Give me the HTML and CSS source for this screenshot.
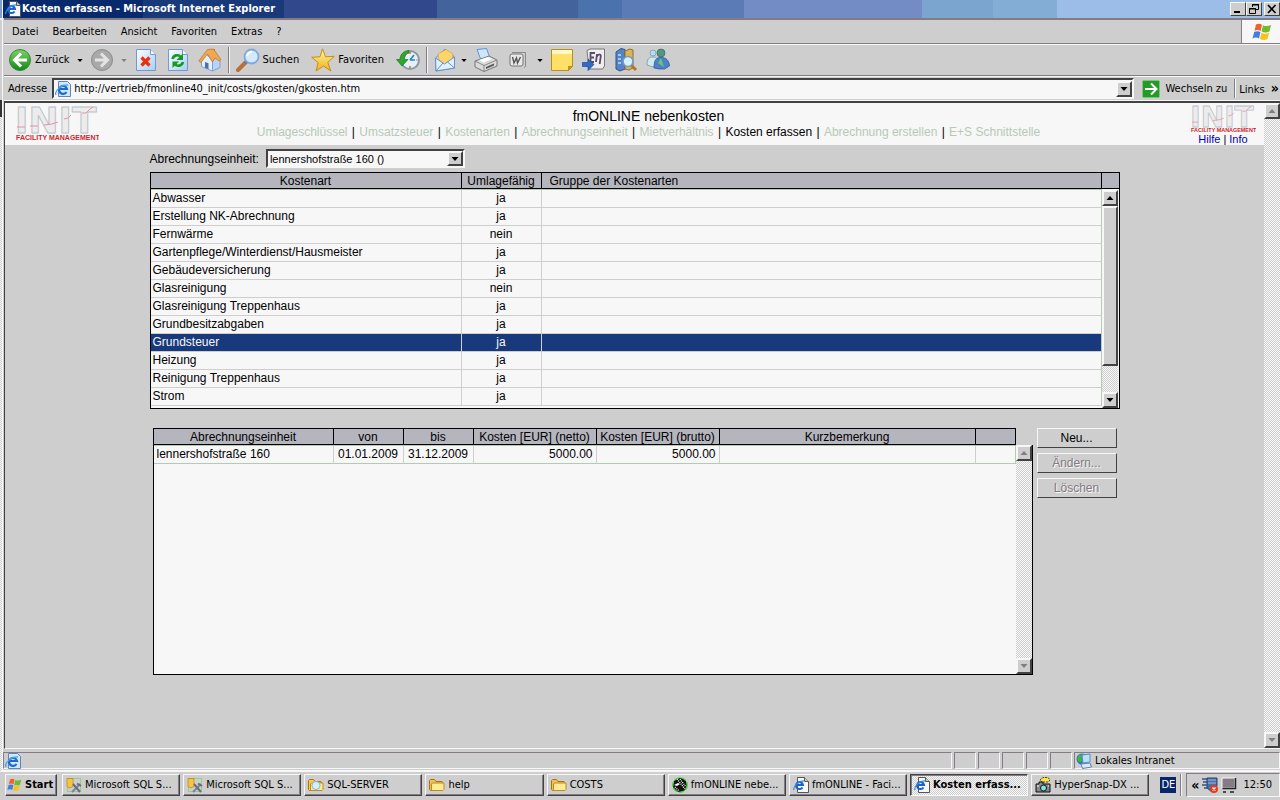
FILE: index.html
```html
<!DOCTYPE html>
<html lang="de">
<head>
    <meta charset="UTF-8">
    <meta name="viewport" content="width=device-width, initial-scale=1.0">
    <title>Kosten erfassen</title>
    <link rel="stylesheet" href="styles.css">
</head>
<body>
    <!-- Icon sprites -->
    <svg class="sprites" aria-hidden="true">
        <defs>
            <linearGradient id="g-green" x1="0" y1="0" x2="0" y2="1"><stop offset="0" stop-color="#7fd06a"/><stop offset="1" stop-color="#128a18"/></linearGradient>
            <linearGradient id="g-gold" x1="0" y1="0" x2="0" y2="1"><stop offset="0" stop-color="#fff6a0"/><stop offset="1" stop-color="#efb21c"/></linearGradient>
            <linearGradient id="g-page" x1="0" y1="0" x2="1" y2="1"><stop offset="0" stop-color="#ffffff"/><stop offset="1" stop-color="#a9cdf5"/></linearGradient>
        </defs>
        <symbol id="i-ie" viewBox="0 0 16 16">
            <path d="M4.500.5h7l4 4v11h-11z" fill="#f7f7f7" stroke="#555"/>
            <path d="M11.500.5v4h4" fill="#ccc" stroke="#555"/>
            <path d="M9.500 10.500a3.500 3.500 0 1 1 .5-2.500H3.500" fill="none" stroke="#1c62c8" stroke-width="2"/>
            <path d="M1 13C-.5 10 6 3.500 11 4" fill="none" stroke="#2f8ae6" stroke-width="1.200"/>
        </symbol>
        <symbol id="i-iepage" viewBox="0 0 16 16">
            <path d="M3.500.5h9l3 3v12h-12z" fill="#d4e6fb" stroke="#5a86bd"/>
            <path d="M11.500 11a4 4 0 1 1 .5-3H4.500" fill="none" stroke="#1b6cc9" stroke-width="2.200"/>
            <path d="M1 14C-1 10 7 3 13 4" fill="none" stroke="#49a2ee" stroke-width="1.300"/>
        </symbol>
        <symbol id="i-flag" viewBox="0 0 20 18">
            <path d="M4 1.500c2-1.200 4-1 6 .2L8.600 8c-2-1.200-4-1.300-6.100-.2z" fill="#f0602a"/>
            <path d="M11 2.200c2.500 1.300 5 1.200 8-.2l-1.600 6.500c-2.600 1.300-5 1.300-7.800.1z" fill="#6fbb2c"/>
            <path d="M2.200 9c2-1.200 4.200-1 6.200.1L7 15.500c-2-1.200-4-1.200-6.500-.1z" fill="#3f7fe0"/>
            <path d="M9.400 9.800c2.400 1.200 5 1.200 7.700 0l-1.600 6.300c-2.500 1.400-5 1.200-7.600-.1z" fill="#fbc21c"/>
        </symbol>
        <symbol id="i-back" viewBox="0 0 24 24">
            <circle cx="12" cy="12" r="10.500" fill="url(#g-green)" stroke="#2e8b2e"/>
            <path d="M13 5.500L6.500 12l6.500 6.500M7 12h12" fill="none" stroke="#fff" stroke-width="3"/>
        </symbol>
        <symbol id="i-forward" viewBox="0 0 24 24">
            <circle cx="12" cy="12" r="10.500" fill="#a9a9a9" stroke="#8b8b8b"/>
            <path d="M11 5.500l6.500 6.500-6.500 6.500M17 12H5" fill="none" stroke="#e4e4e4" stroke-width="3"/>
        </symbol>
        <symbol id="i-stop" viewBox="0 0 24 24">
            <path d="M2.500 1.500h14l5 5v16h-19z" fill="url(#g-page)" stroke="#6e9bd4"/>
            <path d="M16.500 1.500v5h5" fill="#fff" stroke="#6e9bd4"/>
            <path d="M7.500 9.500l8 8m0-8l-8 8" stroke="#e8320e" stroke-width="3.200"/>
        </symbol>
        <symbol id="i-refresh" viewBox="0 0 24 24">
            <path d="M2.500 1.500h14l5 5v16h-19z" fill="url(#g-page)" stroke="#6e9bd4"/>
            <path d="M16.500 1.500v5h5" fill="#fff" stroke="#6e9bd4"/>
            <path d="M6.500 11c1-4 6-5 8-2" fill="none" stroke="#139a20" stroke-width="2.600"/>
            <path d="M17 5.500V12h-6.500z" fill="#139a20"/>
            <path d="M17 14c-1 4-6 5-8 2" fill="none" stroke="#139a20" stroke-width="2.600"/>
            <path d="M6.500 20v-6.500H13z" fill="#139a20"/>
        </symbol>
        <symbol id="i-home" viewBox="0 0 24 24">
            <path d="M14 1.500h3V8h-3z" fill="#b8321c"/>
            <path d="M3.500 12l5-6 6 7v10l-11-4.500z" fill="#e4effc" stroke="#7ea3d6"/>
            <path d="M14.500 13l4-5 3.500 4v7.500l-7.500 3.500z" fill="#b8d3f6" stroke="#7ea3d6"/>
            <path d="M.8 13L9.500 1.500l6-.5L23 11.500l-2 1.500-4-3-2.500 4-5-8-6.500 8.500z" fill="#f0a850" stroke="#c06f20" stroke-width=".7"/>
            <path d="M7 14l3.500 1.200v6L7 19.800z" fill="#4c6fb0"/>
        </symbol>
        <symbol id="i-search" viewBox="0 0 24 24">
            <path d="M2 22l8-8" stroke="#b9703c" stroke-width="4" stroke-linecap="round"/>
            <path d="M9 15l2-2" stroke="#5078c0" stroke-width="3"/>
            <circle cx="15.500" cy="8.500" r="7" fill="#d4ebff" stroke="#7fa8de" stroke-width="1.800"/>
            <path d="M11 8a5 5 0 0 1 5-4" fill="none" stroke="#fff" stroke-width="2"/>
        </symbol>
        <symbol id="i-star" viewBox="0 0 24 24">
            <path d="M11.500.8l3 8 8.800-.5-6.500 6 3 8.700-7.300-5L5 23l2.200-8.300L.7 9.300 9 8.800z" fill="url(#g-gold)" stroke="#c98c12"/>
        </symbol>
        <symbol id="i-history" viewBox="0 0 24 24">
            <circle cx="14" cy="12" r="9" fill="#e3f1fb" stroke="#8b9aa5" stroke-width="2"/>
            <path d="M14 12l4-5M14 12h5" stroke="#3a78b8" stroke-width="1.600"/>
            <path d="M14 4v2m0 12v2m6.500-8h1" stroke="#dd5522" stroke-width="1.300"/>
            <path d="M13 2.500C6 3 4 8 4 11.500H.5L6 18l6-6.500H8.500C8.500 8 10 5.500 13 5z" fill="#2fa52f" stroke="#187818" stroke-width=".7"/>
        </symbol>
        <symbol id="i-mail" viewBox="0 0 24 24">
            <path d="M1.500 10L11 1l9.500 8v11L2 23z" fill="#b9d9fa" stroke="#5f92d0"/>
            <path d="M4 6l8-4.500L19 6l-1 6-7 5-6-5z" fill="#ffd56b" stroke="#d9a23a" stroke-width=".7"/>
            <path d="M1.500 10l9 6 10-7v11L2 23z" fill="#e1f0fe" stroke="#5f92d0"/>
            <path d="M2 23l7-8m11.500 5l-7-6" stroke="#5f92d0"/>
        </symbol>
        <symbol id="i-print" viewBox="0 0 24 24">
            <path d="M3 1.500L12.500.5l3.500 9.500-9 2z" fill="#cfe6ff" stroke="#5e94dc"/>
            <path d="M1 13l14-5 8 4v6l-13 5.500L1 19z" fill="#dadada" stroke="#777"/>
            <path d="M1 13l9 4.500 13-5.500M10 17.500v6" fill="none" stroke="#888"/>
            <path d="M12 19l8-3.500v2L12 21z" fill="#555"/>
            <path d="M5 12l9-3 4 2-8.500 3.500z" fill="#fff"/>
        </symbol>
        <symbol id="i-word" viewBox="0 0 24 24">
            <path d="M6 4.500h13.500v14L18 19.500" fill="none" stroke="#8a8a8a"/>
            <rect x="4" y="6" width="13" height="12" rx="2" fill="#e9e9e9" stroke="#777"/>
            <path d="M6.500 9l1.500 6 2.500-5 1 5 3-6" fill="none" stroke="#555" stroke-width="1.400"/>
        </symbol>
        <symbol id="i-note" viewBox="0 0 24 24">
            <path d="M1.500 1.500h21v17l-4 4h-17z" fill="#ffe066" stroke="#b98f1a"/>
            <path d="M2 2h20v4H2z" fill="#fff7c6"/>
            <path d="M18.500 22.500v-4h4z" fill="#d99a12" stroke="#b98f1a"/>
        </symbol>
        <symbol id="i-en" viewBox="0 0 24 24">
            <path d="M5 2.500l3-1.500h14.500v17l-2 3H7z" fill="#eee" stroke="#777"/>
            <path d="M13 5H8.500v9H12M8.500 9.500H12M14 14l1-8M14.500 9c3-4 5-3 4 1l-.8 6" fill="none" stroke="#574d6b" stroke-width="1.800"/>
            <path d="M.5 14.500H6v-3.500l6 5.500-6 6v-4H.5z" fill="#2f6cc8" stroke="#1b4a96" stroke-width=".7"/>
        </symbol>
        <symbol id="i-books" viewBox="0 0 24 24">
            <path d="M2 4l5-3.500 4 1V21l-5 2-4-2z" fill="#5484c4" stroke="#2e568e"/>
            <path d="M4 7h3m-3 4h3m-3 4h3" stroke="#c3dcf8" stroke-width="1.500"/>
            <path d="M11 3l5-2 3 1v18l-4 2-4-1z" fill="#d9b45a" stroke="#947127"/>
            <path d="M17 17l5 5" stroke="#b8752a" stroke-width="3"/>
            <circle cx="14" cy="13.500" r="5" fill="#d8efff" stroke="#6f9ad0" stroke-width="1.600"/>
        </symbol>
        <symbol id="i-people" viewBox="0 0 24 24">
            <circle cx="7" cy="5" r="3" fill="#b9dcec" stroke="#6f9aa6" stroke-width=".7"/>
            <path d="M1 17c0-6 2-8 6-8s5 2 5 7l-5 3z" fill="#cfe9ee" stroke="#5d90a8" stroke-width=".7"/>
            <circle cx="15" cy="5" r="4" fill="#52987e" stroke="#2f6c70" stroke-width=".7"/>
            <path d="M8 20c0-8 2-10.500 7-10.500S23 12 23.500 18l-5 3H13z" fill="#4c82cc" stroke="#284f92" stroke-width=".7"/>
            <path d="M15 10l3 9-6-4z" fill="#6fc46a"/>
        </symbol>
        <symbol id="i-go" viewBox="0 0 18 18">
            <path d="M0 0h18v18H0z" fill="#259a28" stroke="#d7f0d3"/>
            <path d="M9 3.500L14.500 9 9 14.500M3 9h11" fill="none" stroke="#fff" stroke-width="2"/>
        </symbol>
        <symbol id="i-down" viewBox="0 0 8 4"><path d="M.5 0h7L4 4z"/></symbol>
        <symbol id="i-up" viewBox="0 0 8 4"><path d="M.5 4h7L4 0z"/></symbol>
        <symbol id="i-sql" viewBox="0 0 16 16">
            <path d="M1.500 1.500h13v13h-13z" fill="none" stroke="#5ecb3a" stroke-dasharray="1 1"/>
            <path d="M1 1.500h6v8L4 11 1 9.500z" fill="#f5c443" stroke="#b8821a" stroke-width=".7"/>
            <path d="M6 15l8-8" stroke="#6d88ad" stroke-width="2"/>
            <path d="M7 7l7 8M11 6.500l4 2.500" stroke="#6b6b7b" stroke-width="2"/>
        </symbol>
        <symbol id="i-folder" viewBox="0 0 16 14">
            <path d="M.5 11.500v-9l1-1h4l1.500 2h6l.5 1v8h-12z" fill="#f2c14a" stroke="#a8741a"/>
            <path d="M2.500 12.500V6l1-1h11.500v6.500l-1 1z" fill="#ffeb94" stroke="#c08a22"/>
        </symbol>
        <symbol id="i-folder-find" viewBox="0 0 16 14">
            <path d="M.5 11.500v-9l1-1h4l1.500 2h6l.5 1v8h-12z" fill="#f6c95a" stroke="#a8741a"/>
            <path d="M2.500 12.500V6l1-1h11.500v6.500l-1 1z" fill="#ffe796" stroke="#c08a22"/>
            <circle cx="8" cy="7.500" r="4" fill="#d3f1fb" stroke="#8ab6cc"/>
        </symbol>
        <symbol id="i-zebra" viewBox="0 0 16 16">
            <circle cx="8" cy="8" r="7.200" fill="#111" stroke="#46d838" stroke-width="1.400" stroke-dasharray="5 2"/>
            <path d="M5 2l8 10M8 2l6 8M3 10l4 4" stroke="#eee" stroke-width="1.400" stroke-dasharray="1 1"/>
            <path d="M2 8l4-2 2 1-3 2z" fill="#fff"/>
        </symbol>
        <symbol id="i-camera" viewBox="0 0 16 16">
            <path d="M5 3l3-2.500h5L15 3l-2 2H7z" fill="#ffe14a" stroke="#4b4200" stroke-dasharray="2 1"/>
            <path d="M1 7h3V5h4v2h7v8H1z" fill="#888" stroke="#111"/>
            <circle cx="8.500" cy="11" r="3" fill="#7fe5e5" stroke="#111"/>
            <path d="M2 9h2m9 0h1" stroke="#fff"/>
        </symbol>
        <symbol id="i-intranet" viewBox="0 0 16 16">
            <circle cx="6" cy="6" r="5.500" fill="#2f70d8"/>
            <path d="M2 3c3-3 5-1 4 1s1 4-1 5-5-2-3-6z" fill="#43b43c"/>
            <path d="M6 2l8-1v8l-7 1z" fill="#b8e2fb" stroke="#5b8ec4"/>
            <path d="M5 11l9-1 1.500 4-9 1.500z" fill="#d9e8f6" stroke="#6585ac"/>
        </symbol>
        <symbol id="i-shield" viewBox="0 0 16 16">
            <path d="M0 2h5m-4 3h4m-5 3h5m-3 3h4" stroke="#39567d" stroke-width="1.500"/>
            <path d="M5 1h10v8l-5 6-5-4z" fill="#4870a8" stroke="#2a436c"/>
            <path d="M6 3h8M6 6h8" stroke="#9fbbe0"/>
            <circle cx="12" cy="12" r="4" fill="#e23b22"/>
            <path d="M10.500 10.500l3 3m0-3l-3 3" stroke="#fff" stroke-width="1.200"/>
        </symbol>
        <symbol id="i-monitor" viewBox="0 0 16 16">
            <path d="M1 1h13v10H1z" fill="#847b84" stroke="#f7f7f7"/>
            <path d="M1.500 11.500h13V1M2 15h3m4 0h4" fill="none" stroke="#222" stroke-width="1.500"/>
        </symbol>
    </svg>

    <div class="screen">
        <div class="window-edge"></div>

        <div class="browser">
            <div class="title-bar">
                <svg class="icon-16"><use href="#i-ie"/></svg>
                <span class="title-text">Kosten erfassen - Microsoft Internet Explorer</span>
                <div class="window-buttons">
                    <button class="win-button" aria-label="Minimieren"><svg viewBox="0 0 10 10"><path d="M1 8h6" stroke="#000" stroke-width="2"/></svg></button>
                    <button class="win-button" aria-label="Wiederherstellen"><svg viewBox="0 0 10 10"><path d="M3.500 3V.5h6v5H7M3 1h7M.5 4.500h6v5h-6zM0 5h7" fill="none" stroke="#000"/></svg></button>
                    <button class="win-button close" aria-label="Schließen"><svg viewBox="0 0 10 10"><path d="M1 1l7.500 8M8.500 1L1 9" stroke="#000" stroke-width="1.600"/></svg></button>
                </div>
            </div>

            <nav class="menu-bar">
                <button>Datei</button>
                <button>Bearbeiten</button>
                <button>Ansicht</button>
                <button>Favoriten</button>
                <button>Extras</button>
                <button>?</button>
                <span class="throbber"><svg><use href="#i-flag"/></svg></span>
            </nav>

            <div class="tool-bar">
                <button class="tool has-menu"><svg class="icon-24"><use href="#i-back"/></svg><span>Zurück</span></button>
                <button class="tool-menu" aria-label="Verlauf zurück"><svg><use href="#i-down"/></svg></button>
                <button class="tool" aria-label="Vorwärts"><svg class="icon-24"><use href="#i-forward"/></svg></button>
                <button class="tool-menu disabled" aria-label="Verlauf vorwärts"><svg><use href="#i-down"/></svg></button>
                <button class="tool" aria-label="Abbrechen"><svg class="icon-24"><use href="#i-stop"/></svg></button>
                <button class="tool" aria-label="Aktualisieren"><svg class="icon-24"><use href="#i-refresh"/></svg></button>
                <button class="tool" aria-label="Startseite"><svg class="icon-24"><use href="#i-home"/></svg></button>
                <span class="separator"></span>
                <button class="tool"><svg class="icon-24"><use href="#i-search"/></svg><span>Suchen</span></button>
                <button class="tool"><svg class="icon-24"><use href="#i-star"/></svg><span>Favoriten</span></button>
                <button class="tool" aria-label="Verlauf"><svg class="icon-24"><use href="#i-history"/></svg></button>
                <span class="separator"></span>
                <button class="tool has-menu" aria-label="E-Mail"><svg class="icon-24"><use href="#i-mail"/></svg></button>
                <button class="tool-menu" aria-label="E-Mail-Optionen"><svg><use href="#i-down"/></svg></button>
                <button class="tool" aria-label="Drucken"><svg class="icon-24"><use href="#i-print"/></svg></button>
                <button class="tool" aria-label="Bearbeiten mit Word"><svg class="icon-24"><use href="#i-word"/></svg></button>
                <button class="tool-menu" aria-label="Bearbeiten mit"><svg><use href="#i-down"/></svg></button>
                <button class="tool" aria-label="Notiz"><svg class="icon-24"><use href="#i-note"/></svg></button>
                <button class="tool" aria-label="Übersetzen"><svg class="icon-24"><use href="#i-en"/></svg></button>
                <button class="tool" aria-label="Recherchieren"><svg class="icon-24"><use href="#i-books"/></svg></button>
                <button class="tool" aria-label="Messenger"><svg class="icon-24"><use href="#i-people"/></svg></button>
            </div>

            <div class="address-bar">
                <label for="address">Adresse</label>
                <div class="address-box">
                    <svg class="icon-16"><use href="#i-iepage"/></svg>
                    <input id="address" type="text" value="http://vertrieb/fmonline40_init/costs/gkosten/gkosten.htm">
                    <button class="scroll-button" aria-label="Adressliste"><svg><use href="#i-down"/></svg></button>
                </div>
                <button class="go"><svg class="icon-18"><use href="#i-go"/></svg><span>Wechseln zu</span></button>
                <span class="separator"></span>
                <button class="links">Links <b>»</b></button>
            </div>

            <div class="viewport">
                <div class="page">
                    <header class="page-header">
                        <svg class="logo" viewBox="0 0 84 36" role="img" aria-label="INIT Facility Management">
                            <text x="0" y="28" class="logo-letters">INIT</text>
                            <path d="M2 22h8M15 21h8M29 20l8-1 6-2M49 14l4-1 3-3M67 8l4 0 4-4 3-2" fill="none" stroke="#e890a4"/>
                            <text x="1" y="35" class="logo-caption">FACILITY MANAGEMENT</text>
                        </svg>
                        <div class="page-heading">
                            <h1>fmONLINE nebenkosten</h1>
                            <nav class="page-nav">
                                <a href="#">Umlageschlüssel</a> | <a href="#">Umsatzsteuer</a> | <a href="#">Kostenarten</a> | <a href="#">Abrechnungseinheit</a> | <a href="#">Mietverhältnis</a> | <a href="#" class="active">Kosten erfassen</a> | <a href="#">Abrechnung erstellen</a> | <a href="#">E+S Schnittstelle</a>
                            </nav>
                        </div>
                        <div class="page-help">
                            <svg class="logo-small" viewBox="0 0 84 36" role="img" aria-label="INIT Facility Management">
                                <text x="0" y="28" class="logo-letters">INIT</text>
                                <path d="M2 22h8M29 20l8-1 6-2M49 14l4-1 3-3M67 8l4 0 4-4 3-2" fill="none" stroke="#e890a4"/>
                                <text x="1" y="35" class="logo-caption">FACILITY MANAGEMENT</text>
                            </svg>
                            <div><a href="#">Hilfe</a> | <a href="#">Info</a></div>
                        </div>
                    </header>

                    <main class="content">
                        <div class="unit-row">
                            <label for="unit">Abrechnungseinheit:</label>
                            <div class="select-box">
                                <select id="unit"><option>lennershofstraße 160 ()</option></select>
                                <span class="scroll-button"><svg><use href="#i-down"/></svg></span>
                            </div>
                        </div>

                        <div class="grid-panel cost-types">
                            <table>
                                <thead>
                                    <tr><th class="col-type">Kostenart</th><th class="col-share">Umlagefähig</th><th class="left">Gruppe der Kostenarten</th></tr>
                                </thead>
                                <tbody>
                                    <tr><td>Abwasser</td><td>ja</td><td></td></tr>
                                    <tr><td>Erstellung NK-Abrechnung</td><td>ja</td><td></td></tr>
                                    <tr><td>Fernwärme</td><td>nein</td><td></td></tr>
                                    <tr><td>Gartenpflege/Winterdienst/Hausmeister</td><td>ja</td><td></td></tr>
                                    <tr><td>Gebäudeversicherung</td><td>ja</td><td></td></tr>
                                    <tr><td>Glasreinigung</td><td>nein</td><td></td></tr>
                                    <tr><td>Glasreinigung Treppenhaus</td><td>ja</td><td></td></tr>
                                    <tr><td>Grundbesitzabgaben</td><td>ja</td><td></td></tr>
                                    <tr class="selected"><td>Grundsteuer</td><td>ja</td><td></td></tr>
                                    <tr><td>Heizung</td><td>ja</td><td></td></tr>
                                    <tr><td>Reinigung Treppenhaus</td><td>ja</td><td></td></tr>
                                    <tr><td>Strom</td><td>ja</td><td></td></tr>
                                </tbody>
                            </table>
                            <div class="panel-side">
                                <div class="head-cap"></div>
                                <div class="scrollbar">
                                    <button class="scroll-button" aria-label="Nach oben"><svg><use href="#i-up"/></svg></button>
                                    <div class="thumb"></div>
                                    <button class="scroll-button" aria-label="Nach unten"><svg><use href="#i-down"/></svg></button>
                                </div>
                            </div>
                        </div>

                        <div class="costs-row">
                            <div class="grid-panel costs">
                                <div class="table-area">
                                    <table>
                                        <thead>
                                            <tr>
                                                <th class="col-unit">Abrechnungseinheit</th>
                                                <th class="col-date">von</th>
                                                <th class="col-date">bis</th>
                                                <th class="col-cost">Kosten [EUR] (netto)</th>
                                                <th class="col-cost">Kosten [EUR] (brutto)</th>
                                                <th>Kurzbemerkung</th>
                                                <th class="col-end"></th>
                                            </tr>
                                        </thead>
                                        <tbody>
                                            <tr><td>lennershofstraße 160</td><td class="date">01.01.2009</td><td class="date">31.12.2009</td><td class="num">5000.00</td><td class="num">5000.00</td><td></td><td></td></tr>
                                        </tbody>
                                    </table>
                                </div>
                                <div class="panel-side">
                                    <div class="scrollbar disabled">
                                        <button class="scroll-button" aria-label="Nach oben" disabled><svg><use href="#i-up"/></svg></button>
                                        <button class="scroll-button" aria-label="Nach unten" disabled><svg><use href="#i-down"/></svg></button>
                                    </div>
                                </div>
                            </div>
                            <div class="actions">
                                <button>Neu...</button>
                                <button disabled>Ändern...</button>
                                <button disabled>Löschen</button>
                            </div>
                        </div>
                    </main>
                </div>
                <div class="scrollbar disabled">
                    <button class="scroll-button" aria-label="Nach oben" disabled><svg><use href="#i-up"/></svg></button>
                    <button class="scroll-button" aria-label="Nach unten" disabled><svg><use href="#i-down"/></svg></button>
                </div>
            </div>

            <div class="status-bar">
                <div class="pane wide"><svg class="icon-16"><use href="#i-iepage"/></svg></div>
                <div class="pane"></div>
                <div class="pane"></div>
                <div class="pane"></div>
                <div class="pane"></div>
                <div class="pane"></div>
                <div class="pane zone"><svg class="icon-16"><use href="#i-intranet"/></svg>Lokales Intranet</div>
            </div>
        </div>
    </div>

    <div class="task-bar">
        <button class="start"><svg class="icon-16"><use href="#i-flag"/></svg><span>Start</span></button>
        <div class="tasks">
            <button class="task"><svg class="icon-16"><use href="#i-sql"/></svg><span>Microsoft SQL S...</span></button>
            <button class="task"><svg class="icon-16"><use href="#i-sql"/></svg><span>Microsoft SQL S...</span></button>
            <button class="task"><svg class="icon-16"><use href="#i-folder-find"/></svg><span>SQL-SERVER</span></button>
            <button class="task"><svg class="icon-16"><use href="#i-folder"/></svg><span>help</span></button>
            <button class="task"><svg class="icon-16"><use href="#i-folder"/></svg><span>COSTS</span></button>
            <button class="task"><svg class="icon-16"><use href="#i-zebra"/></svg><span>fmONLINE nebe...</span></button>
            <button class="task"><svg class="icon-16"><use href="#i-ie"/></svg><span>fmONLINE - Faci...</span></button>
            <button class="task pressed"><svg class="icon-16"><use href="#i-ie"/></svg><span>Kosten erfass...</span></button>
            <button class="task"><svg class="icon-16"><use href="#i-camera"/></svg><span>HyperSnap-DX ...</span></button>
        </div>
        <span class="language">DE</span>
        <span class="separator"></span>
        <div class="tray">
            <b>«</b>
            <svg class="icon-16"><use href="#i-shield"/></svg>
            <svg class="icon-16"><use href="#i-monitor"/></svg>
            <span class="clock">12:50</span>
        </div>
    </div>
</body>
</html>
```
FILE: styles.css
```css
/* Base styles */
:root {
    --face: #cecece;
    --light: #f7f7f7;
    --shadow: #847b84;
    --dark: #424242;
    --head: #b5b5bd;
    --select: #18397b;
    --muted: #b5cab5;
    --ui-font: Tahoma, "DejaVu Sans Condensed", "Noto Sans", sans-serif;
    --page-font: Arial, "Liberation Sans", sans-serif;
    --checker: repeating-conic-gradient(#f7f7f7 0 25%, #cecece 0 50%) 0 0 / 2px 2px;
}

* {
    box-sizing: border-box;
}

body {
    margin: 0;
    height: 100vh;
    display: flex;
    flex-direction: column;
    background: var(--face);
    font: 11px/14px var(--ui-font);
    color: #000;
    overflow: hidden;
}

button,
input,
select {
    font: inherit;
    color: inherit;
    margin: 0;
    padding: 0;
    border: 0;
    background: none;
    white-space: nowrap;
}

a {
    text-decoration: none;
}

svg {
    display: block;
    flex: none;
}

.sprites {
    position: absolute;
    width: 0;
    height: 0;
}

.icon-16 { width: 16px; height: 16px; }
.icon-18 { width: 18px; height: 18px; }
.icon-24 { width: 24px; height: 24px; }

.separator {
    align-self: stretch;
    width: 2px;
    margin: 2px;
    border-left: 1px solid var(--shadow);
    border-right: 1px solid var(--light);
}

.screen {
    flex: 1;
    min-height: 0;
    display: flex;
}

/* Edge of the window behind */
.window-edge {
    width: 3px;
    border-right: 1px solid var(--light);
    background: linear-gradient(#7f9fcf 18px, var(--light) 18px, var(--face) 21px, var(--face) 100px, #333 100px, #333 117px, transparent 117px), var(--checker);
}

.browser {
    flex: 1;
    min-width: 0;
    display: flex;
    flex-direction: column;
}

/* Title bar */
.title-bar {
    display: flex;
    align-items: center;
    height: 18px;
    padding-left: 2px;
    background: linear-gradient(90deg, #08296b 11%, #183a7b 11%, #183a7b 22%, #31498c 22%, #31498c 34%, #42639c 34%, #42639c 45%, #4a73ad 45%, #4a73ad 48.500%, #5a7bb5 48.500%, #5a7bb5 58%, #738cc6 58%, #738cc6 72%, #7ba5ce 72%, #7ba5ce 77.500%, #84add6 77.500%, #84add6 82.500%, #9cbde7 82.500%);
    color: #fff;
}

.title-text {
    flex: 1;
    margin-left: 1px;
    font-weight: bold;
}

.window-buttons {
    display: flex;
}

.win-button {
    width: 16px;
    height: 14px;
    padding: 1px 2px;
    background: var(--face);
    border: 1px solid;
    border-color: var(--light) var(--dark) var(--dark) var(--light);
}

.win-button.close {
    margin-left: 2px;
}

.win-button svg {
    width: 10px;
    height: 10px;
}

/* Menu bar */
.menu-bar {
    display: flex;
    align-items: center;
    gap: 14px;
    height: 26px;
    margin-left: 1px;
    padding-left: 8px;
    border-top: 2px solid var(--shadow);
    border-bottom: 1px solid var(--shadow);
}

.throbber {
    display: flex;
    align-items: center;
    align-self: stretch;
    width: 39px;
    margin-left: auto;
    padding-left: 10px;
    background: var(--light);
    border-left: 1px solid var(--shadow);
}

.throbber svg {
    width: 20px;
    height: 18px;
}

/* Toolbar */
.tool-bar {
    display: flex;
    align-items: center;
    height: 32px;
    margin-left: 1px;
    border-top: 1px solid var(--light);
    border-bottom: 1px solid var(--shadow);
}

.tool {
    display: flex;
    align-items: center;
    gap: 3px;
    padding: 0 4px;
}

.tool span {
    padding-right: 4px;
}

.tool.has-menu {
    padding-right: 0;
}

.tool-menu {
    width: 12px;
    padding: 0 3px;
}

.tool-menu svg {
    width: 6px;
    height: 3px;
}

.tool-menu.disabled {
    fill: var(--shadow);
}

/* Address bar */
.address-bar {
    display: flex;
    align-items: center;
    height: 25px;
    margin-left: 1px;
    padding-left: 4px;
    border-top: 1px solid var(--light);
    border-bottom: 1px solid var(--light);
}

.address-box {
    flex: 1;
    display: flex;
    align-items: center;
    gap: 3px;
    height: 21px;
    margin: 0 5px;
    padding-left: 1px;
    background: var(--light);
    border: 2px solid;
    border-color: var(--dark) var(--light) var(--light) var(--dark);
}

.address-box input {
    flex: 1;
    min-width: 0;
    outline: 0;
}

.go {
    display: flex;
    align-items: center;
    gap: 5px;
    padding: 0 5px 0 3px;
}

.links {
    padding: 0 1px;
}

.links b {
    margin-left: 3px;
    font-size: 14px;
}

/* Scrollbars */
.scroll-button {
    display: flex;
    align-items: center;
    justify-content: center;
    width: 16px;
    height: 16px;
    flex: none;
    background: var(--face);
    border: 2px solid;
    border-color: var(--light) var(--dark) var(--dark) var(--light);
}

.scroll-button svg {
    width: 8px;
    height: 4px;
}

.scroll-button:disabled {
    fill: var(--shadow);
}

.scrollbar {
    display: flex;
    flex-direction: column;
    width: 16px;
    flex: none;
    background: var(--checker);
}

.scrollbar.disabled {
    justify-content: space-between;
}

.thumb {
    flex: 1;
    background: var(--face);
    border: 2px solid;
    border-color: var(--light) var(--dark) var(--dark) var(--light);
}

/* Page */
.viewport {
    flex: 1;
    min-height: 0;
    display: flex;
    margin-left: 1px;
    border-top: 2px solid var(--dark);
    border-left: 1px solid var(--dark);
    border-bottom: 1px solid var(--light);
}

.page {
    flex: 1;
    min-width: 0;
    overflow: hidden;
    font: 12px/16px var(--page-font);
}

.page-header {
    display: flex;
    justify-content: space-between;
    height: 42px;
    padding: 2px 8px 0 10px;
    background: var(--light);
}

.logo {
    width: 84px;
    height: 36px;
    margin-right: 8px;
}

.logo-small {
    width: 66px;
    height: 28px;
}

.logo-letters {
    font: bold 36px "DejaVu Sans", sans-serif;
    fill: #ececec;
    stroke: #bcc3ca;
}

.logo-caption {
    font: bold 7px "Liberation Sans", sans-serif;
    fill: #d41f2c;
}

.page-heading {
    text-align: center;
}

.page-heading h1 {
    margin: 3px 0 0;
    font-size: 14px;
    line-height: 16px;
    font-weight: normal;
}

.page-nav a {
    padding: 0 1px;
    color: var(--muted);
}

.page-nav a.active {
    color: #000;
}

.page-help {
    width: 66px;
    text-align: center;
    font-size: 11px;
    line-height: 12px;
}

.page-help a {
    color: #0000b5;
}

.content {
    max-width: 970px;
    margin: 0 auto;
}

.unit-row {
    display: flex;
    align-items: center;
    gap: 7px;
    padding: 4px 0;
}

.select-box {
    position: relative;
    width: 199px;
    border: 2px solid;
    border-color: var(--dark) var(--light) var(--light) var(--dark);
    background: var(--light);
}

.select-box select {
    display: block;
    width: 100%;
    height: 15px;
    padding-left: 2px;
    font-size: 11px;
    appearance: none;
}

.select-box .scroll-button {
    position: absolute;
    top: 0;
    right: 0;
    height: 15px;
    pointer-events: none;
}

/* Data grids */
.grid-panel {
    display: flex;
}

.grid-panel table {
    width: 100%;
    table-layout: fixed;
    border-collapse: separate;
    border-spacing: 0;
}

.grid-panel th {
    height: 17px;
    padding: 2px 0 0;
    background: var(--head);
    border: solid #000;
    border-width: 1px 1px 1px 0;
    font-weight: normal;
    line-height: 13px;
    white-space: nowrap;
}

.grid-panel th.left {
    padding-left: 8px;
    text-align: left;
}

.grid-panel td {
    height: 18px;
    padding: 0 2px;
    background: var(--light);
    border: solid var(--face);
    border-width: 0 1px 1px 0;
    line-height: 17px;
    white-space: nowrap;
}

.grid-panel tbody tr:first-child td {
    height: 19px;
    border-top: 1px solid var(--muted);
}

.panel-side {
    display: flex;
    flex-direction: column;
    flex: none;
}

.panel-side .scrollbar {
    flex: 1;
}

.cost-types {
    border-left: 1px solid #000;
    border-right: 1px solid #000;
    border-bottom: 1px solid #000;
    padding-bottom: 2px;
    background: var(--light);
}

.cost-types .panel-side {
    width: 17px;
    margin-bottom: -2px;
}

.cost-types .col-type { width: 311px; }
.cost-types .col-share { width: 80px; }

.cost-types td:nth-child(2) {
    text-align: center;
}

.cost-types td:last-child {
    border-right-color: var(--muted);
}

.cost-types .selected td {
    background: var(--select);
    color: var(--light);
}

.cost-types .thumb {
    margin-bottom: 26px;
}

.head-cap {
    height: 17px;
    margin-bottom: 1px;
    background: var(--head);
    border-top: 1px solid #000;
    border-bottom: 1px solid #000;
}

.costs-row {
    display: flex;
    align-items: flex-start;
    gap: 4px;
    padding: 19px 3px 0;
}

.costs {
    flex: 1;
    height: 247px;
    border-bottom: 1px solid #000;
}

.table-area {
    flex: 1;
    background: var(--light);
    border-left: 1px solid #000;
}

.costs .panel-side {
    padding-top: 17px;
}

.costs .scrollbar {
    width: 17px;
    border-right: 1px solid #000;
}

.costs .col-unit { width: 180px; }
.costs .col-date { width: 70px; }
.costs .col-cost { width: 123px; }
.costs .col-end { width: 40px; }

.costs td {
    padding: 0 3px;
    border-bottom-color: var(--muted);
}

.costs td:last-child {
    border-right-color: var(--muted);
}

.costs .date {
    text-align: center;
}

.costs .num {
    text-align: right;
}

.actions {
    display: flex;
    flex-direction: column;
    gap: 5px;
}

.actions button {
    width: 80px;
    height: 20px;
    border: 1px solid;
    border-color: var(--light) var(--dark) var(--dark) var(--light);
}

.actions button:disabled {
    color: var(--shadow);
    text-shadow: 1px 1px 0 var(--light);
}

/* Status bar */
.status-bar {
    display: flex;
    gap: 2px;
    height: 22px;
    padding: 3px 0 1px;
    border-bottom: 1px solid var(--light);
}

.pane {
    display: flex;
    align-items: center;
    gap: 3px;
    width: 22px;
    border: 1px solid;
    border-color: var(--shadow) var(--light) var(--light) var(--shadow);
}

.pane.wide {
    flex: 1;
    padding-left: 1px;
}

.pane.zone {
    width: 206px;
    padding-left: 1px;
}

/* Taskbar */
.task-bar {
    display: flex;
    align-items: center;
    height: 29px;
    padding: 0 0 2px 5px;
    border-top: 1px solid var(--light);
}

.start,
.task {
    display: flex;
    align-items: center;
    gap: 3px;
    height: 22px;
    border: 1px solid;
    border-color: var(--light) var(--dark) var(--dark) var(--light);
    box-shadow: inset -1px -1px 0 var(--shadow);
}

.start {
    width: 52px;
    padding-left: 1px;
    font-weight: bold;
}

.start .icon-16 {
    width: 15px;
}

.tasks {
    flex: 1;
    min-width: 0;
    display: flex;
    gap: 3px;
    margin: 0 11px 0 5px;
}

.task {
    flex: 1;
    min-width: 0;
    padding-left: 3px;
    overflow: hidden;
}

.task.pressed {
    background: var(--checker);
    border-color: var(--dark) var(--light) var(--light) var(--dark);
    box-shadow: inset 1px 1px 0 var(--shadow);
    font-weight: bold;
}

.language {
    width: 16px;
    line-height: 16px;
    background: #08246b;
    color: #fff;
    text-align: center;
}

.task-bar .separator {
    margin: 2px 4px;
}

.tray {
    display: flex;
    align-items: center;
    gap: 3px;
    height: 24px;
    padding: 0 7px 0 4px;
    border: 1px solid;
    border-color: var(--shadow) var(--light) var(--light) var(--shadow);
}

.tray b {
    font-size: 14px;
}

.clock {
    margin-left: 3px;
}
```
